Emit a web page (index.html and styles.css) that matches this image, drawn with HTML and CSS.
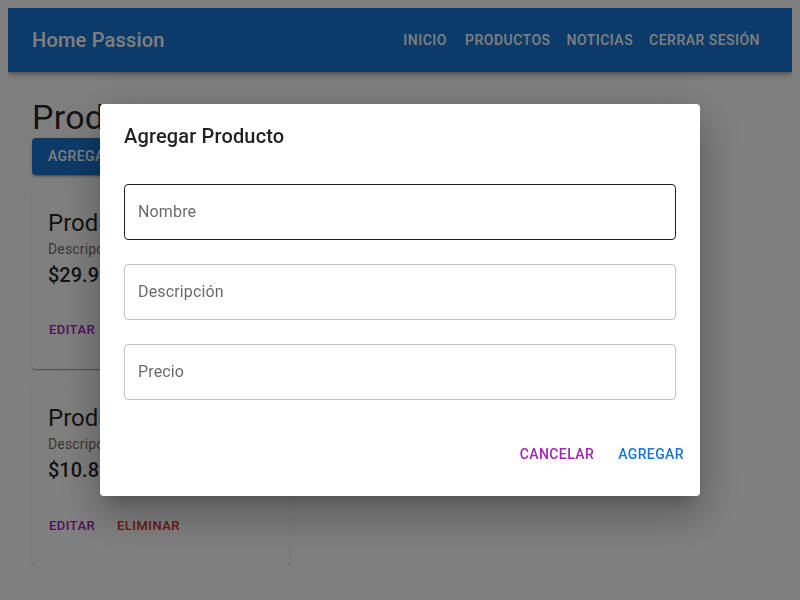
FILE: index.html
```html
<!DOCTYPE html>
<html lang="es">
<head>
<meta charset="utf-8">
<title>Home Passion</title>
<link rel="stylesheet" href="styles.css">
</head>
<body>
<header class="appbar">
  <div class="brand">Home Passion</div>
  <nav class="nav">
    <a class="nav-btn">Inicio</a>
    <a class="nav-btn">Productos</a>
    <a class="nav-btn">Noticias</a>
    <a class="nav-btn">Cerrar sesión</a>
  </nav>
</header>
<main class="content">
  <h1 class="page-title">Productos</h1>
  <button class="btn-contained">Agregar producto</button>
  <div class="cards">
    <div class="card">
      <div class="card-content">
        <h2 class="card-title">Producto 1</h2>
        <p class="card-desc">Descripción del producto 1</p>
        <p class="card-price">$29.99</p>
      </div>
      <div class="card-actions">
        <button class="btn-small purple">Editar</button>
        <button class="btn-small red">Eliminar</button>
      </div>
    </div>
    <div class="card">
      <div class="card-content">
        <h2 class="card-title">Producto 2</h2>
        <p class="card-desc">Descripción del producto 2</p>
        <p class="card-price">$10.89</p>
      </div>
      <div class="card-actions">
        <button class="btn-small purple">Editar</button>
        <button class="btn-small red">Eliminar</button>
      </div>
    </div>
  </div>
</main>
<div class="backdrop">
  <div class="dialog">
    <h2 class="dialog-title">Agregar Producto</h2>
    <div class="dialog-content">
      <div class="field hover"><span class="field-label">Nombre</span></div>
      <div class="field"><span class="field-label">Descripción</span></div>
      <div class="field"><span class="field-label">Precio</span></div>
    </div>
    <div class="dialog-actions">
      <button class="btn-text purple">Cancelar</button>
      <button class="btn-text blue">Agregar</button>
    </div>
  </div>
</div>
</body>
</html>
```

FILE: styles.css
```css
* { box-sizing: border-box; }
html, body { background: #fff; }
body {
  margin: 8px;
  font-family: Roboto, "Noto Sans", sans-serif;
  color: rgba(0,0,0,0.87);
}
.appbar {
  height: 64px;
  background: #1976d2;
  color: #fff;
  display: flex;
  align-items: center;
  justify-content: space-between;
  padding: 0 24px;
  box-shadow: 0 2px 4px -1px rgba(0,0,0,0.2), 0 4px 5px 0 rgba(0,0,0,0.14), 0 1px 10px 0 rgba(0,0,0,0.12);
}
.brand {
  font-size: 20px;
  font-weight: 500;
  letter-spacing: 0.2px;
}
.nav { display: flex; }
.nav-btn {
  min-width: 64px;
  padding: 6px 8px;
  font-size: 14px;
  font-weight: 500;
  line-height: 24.5px;
  letter-spacing: 0.48px;
  text-transform: uppercase;
  text-align: center;
  color: #fff;
}
.content {
  padding: 24px 24px 0;
}
.page-title {
  margin: 0;
  font-size: 34px;
  font-weight: 400;
  line-height: 42px;
  letter-spacing: 0.25px;
}
button {
  font-family: inherit;
  border: 0;
  background: none;
  cursor: pointer;
}
.btn-contained {
  display: block;
  height: 36.5px;
  padding: 6px 16px;
  background: #1976d2;
  color: #fff;
  border-radius: 4px;
  font-size: 14px;
  font-weight: 500;
  letter-spacing: 0.4px;
  text-transform: uppercase;
  box-shadow: 0 3px 1px -2px rgba(0,0,0,0.2), 0 2px 2px 0 rgba(0,0,0,0.14), 0 1px 5px 0 rgba(0,0,0,0.12);
}
.cards {
  margin-top: 16px;
  display: flex;
  flex-direction: column;
  gap: 17px;
  width: 258px;
}
.card {
  background: #fff;
  border-radius: 4px;
  box-shadow: 0 2px 1px -1px rgba(0,0,0,0.2), 0 1px 1px 0 rgba(0,0,0,0.14), 0 1px 3px 0 rgba(0,0,0,0.12);
}
.card-content { padding: 16px; }
.card-title {
  margin: 0;
  font-size: 24px;
  font-weight: 400;
  line-height: 32px;
}
.card-desc {
  margin: 0;
  font-size: 14px;
  line-height: 20px;
  color: rgba(0,0,0,0.6);
  letter-spacing: 0.15px;
}
.card-price {
  margin: 0;
  font-size: 20px;
  font-weight: 500;
  line-height: 32px;
}
.card-actions {
  display: flex;
  gap: 8px;
  padding: 8px 8px 24px;
}
.btn-small {
  min-width: 64px;
  height: 30.75px;
  padding: 4px 5px;
  font-size: 13px;
  font-weight: 500;
  letter-spacing: 0.46px;
  text-transform: uppercase;
}
.purple { color: #9c27b0; }
.red { color: #d32f2f; }
.blue { color: #1976d2; }
.backdrop {
  position: fixed;
  inset: 0;
  background: rgba(0,0,0,0.5);
  display: flex;
  align-items: center;
  justify-content: center;
}
.dialog {
  width: 600px;
  background: #fff;
  border-radius: 4px;
  box-shadow: 0 11px 15px -7px rgba(0,0,0,0.2), 0 24px 38px 3px rgba(0,0,0,0.14), 0 9px 46px 8px rgba(0,0,0,0.12);
}
.dialog-title {
  margin: 0;
  padding: 16px 24px;
  font-size: 20px;
  font-weight: 500;
  line-height: 32px;
  letter-spacing: 0.15px;
}
.dialog-content {
  display: flex;
  flex-direction: column;
  padding: 0 24px 20px;
}
.field {
  height: 56px;
  margin: 16px 0 8px;
  border: 1px solid rgba(0,0,0,0.23);
  border-radius: 4px;
  display: flex;
  align-items: center;
  padding: 0 13px;
}
.field.hover { border-color: rgba(0,0,0,0.87); }
.field-label {
  font-size: 16px;
  color: rgba(0,0,0,0.6);
  letter-spacing: 0.15px;
}
.dialog-actions {
  display: flex;
  justify-content: flex-end;
  gap: 8px;
  padding: 8px 8px 24px;
}
.btn-text {
  min-width: 64px;
  height: 36.5px;
  padding: 6px 8px;
  font-size: 14px;
  font-weight: 500;
  letter-spacing: 0.4px;
  text-transform: uppercase;
}
```
